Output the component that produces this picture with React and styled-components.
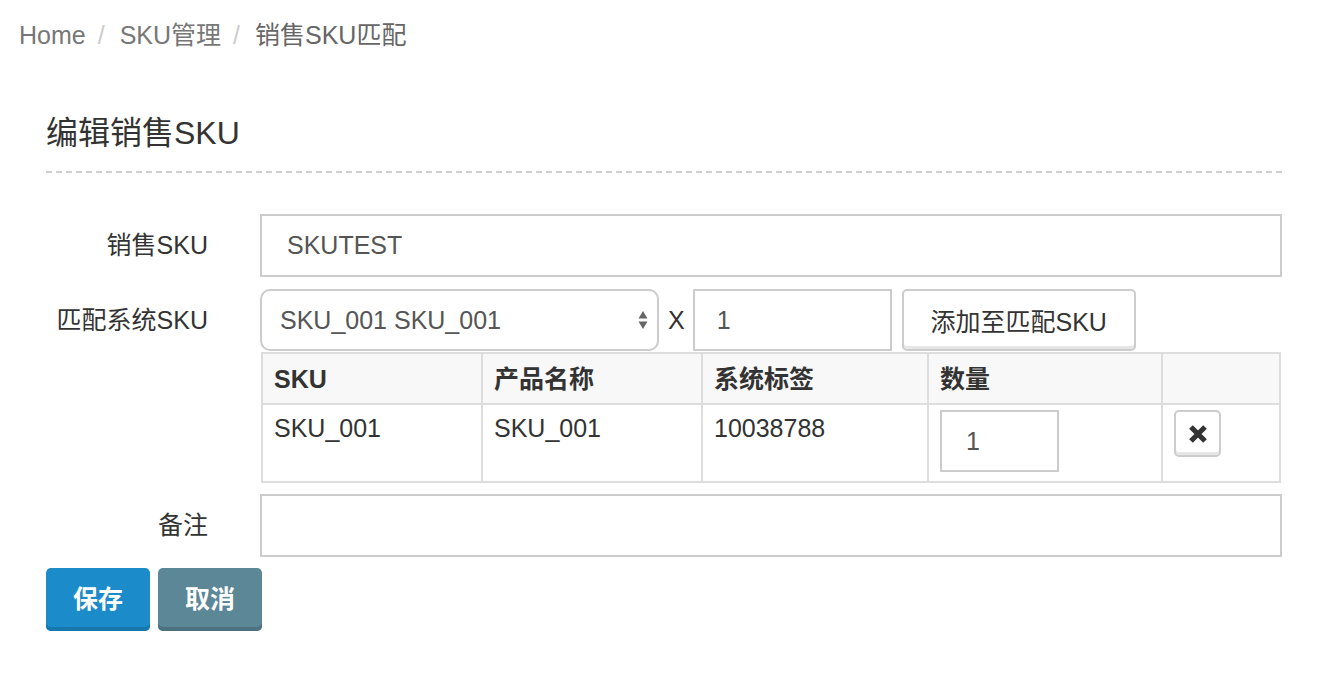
import React from 'react';
import styled, { createGlobalStyle } from 'styled-components';

const GlobalStyle = createGlobalStyle`
  * { box-sizing: border-box; }
  body {
    margin: 0;
    background: #fff;
    color: #333;
    font-family: "Liberation Sans", "Noto Sans CJK SC", sans-serif;
    font-size: 25px;
  }
`;

const Breadcrumb = styled.ol`
  list-style: none;
  margin: 0;
  padding: 17px 19px 0;
  display: flex;
  line-height: 36px;
`;

const Crumb = styled.li`
  color: ${p => (p.$active ? '#666' : '#777')};

  &:not(:first-child)::before {
    content: '/';
    color: #ccc;
    padding: 0 15px 0 12px;
  }
`;

const Page = styled.div`
  padding: 62px 48px 0 46px;
`;

const Title = styled.h3`
  margin: 0;
  font-size: 32px;
  font-weight: 400;
  line-height: 36px;
  color: #333;
  padding-bottom: 20px;
`;

const Divider = styled.div`
  height: 2px;
  background: repeating-linear-gradient(to right, #cfcfcf 0 6px, transparent 6px 10px);
`;

const Form = styled.form`
  margin-top: 41px;
  display: flex;
  flex-direction: column;
`;

const FormRow = styled.div`
  display: flex;
  align-items: flex-start;
  margin-top: ${p => p.$gap || 0}px;
`;

const Label = styled.label`
  width: 214px;
  flex-shrink: 0;
  padding-right: 52px;
  text-align: right;
  line-height: 63px;
  color: #333;
`;

const Field = styled.div`
  flex: 1;
  min-width: 0;
`;

const TextInput = styled.input`
  display: block;
  width: ${p => (p.$w ? `${p.$w}px` : '100%')};
  height: ${p => p.$h || 63}px;
  border: 2px solid #ccc;
  padding: 0 ${p => p.$pl || 25}px;
  font: inherit;
  color: #555;
  background: #fff;
  outline: none;
`;

const InlineGroup = styled.div`
  display: flex;
  align-items: center;
`;

const Select = styled.div`
  width: 399px;
  height: 62px;
  border: 2px solid #ccc;
  border-radius: 10px;
  padding: 0 9px 0 18px;
  display: flex;
  align-items: center;
  justify-content: space-between;
  color: #555;
`;

const Times = styled.span`
  margin: 0 8px 0 9px;
  color: #333;
`;

const DefaultButton = styled.button`
  height: ${p => p.$h || 62}px;
  width: ${p => p.$w}px;
  margin-left: ${p => p.$ml || 0}px;
  border: 2px solid #ccc;
  border-radius: 5px;
  background: #fff;
  box-shadow: inset 0 -3px 0 #e6e6e6;
  color: #333;
  font: inherit;
  padding: 0;
  display: flex;
  align-items: center;
  justify-content: center;
  cursor: pointer;
`;

const Table = styled.table`
  width: calc(100% - 2px);
  margin: 1px 0 0 1px;
  border-collapse: collapse;
  border: 2px solid #ddd;
  table-layout: fixed;
`;

const Th = styled.th`
  background: #f8f8f8;
  border: 2px solid #ddd;
  text-align: left;
  font-weight: 700;
  padding: 6px 11px;
  line-height: 36px;
  height: 51px;
  color: #333;
`;

const Td = styled.td`
  border: 2px solid #ddd;
  padding: 5px 11px 5px 11px;
  vertical-align: top;
  line-height: 36px;
  height: 78px;
  color: #333;
`;

const ButtonBar = styled.div`
  display: flex;
  gap: 8px;
  margin-top: 11px;
`;

const ActionButton = styled.button`
  width: 104px;
  height: 63px;
  border: none;
  border-radius: 5px;
  color: #fff;
  font: inherit;
  font-weight: 700;
  background: ${p => (p.$variant === 'primary' ? '#1b8bca' : '#5b8797')};
  box-shadow: inset 0 -4px 0 ${p => (p.$variant === 'primary' ? '#1677ad' : '#4c7180')};
  padding: 0 0 6px;
  cursor: pointer;
`;

function SortArrows() {
  return (
    <svg width="10" height="22" viewBox="0 0 10 22">
      <path d="M5 2 L9.5 9.5 L0.5 9.5 Z" fill="#666" />
      <path d="M5 20 L9.5 12.5 L0.5 12.5 Z" fill="#666" />
    </svg>
  );
}

function RemoveIcon() {
  return (
    <svg width="20" height="20" viewBox="0 0 20 20">
      <path d="M3 3 L17 17 M17 3 L3 17" stroke="#333" strokeWidth="5.2" strokeLinecap="butt" />
    </svg>
  );
}

export default function App() {
  return (
    <>
      <GlobalStyle />
      <Breadcrumb>
        <Crumb>Home</Crumb>
        <Crumb>SKU管理</Crumb>
        <Crumb $active>销售SKU匹配</Crumb>
      </Breadcrumb>
      <Page>
        <Title>编辑销售SKU</Title>
        <Divider />
        <Form onSubmit={e => e.preventDefault()}>
          <FormRow>
            <Label>销售SKU</Label>
            <Field>
              <TextInput defaultValue="SKUTEST" />
            </Field>
          </FormRow>
          <FormRow $gap={12}>
            <Label>匹配系统SKU</Label>
            <Field>
              <InlineGroup>
                <Select>
                  <span>SKU_001 SKU_001</span>
                  <SortArrows />
                </Select>
                <Times>X</Times>
                <TextInput $w={199} $h={62} $pl={22} defaultValue="1" />
                <DefaultButton type="button" $w={234} $ml={10}>添加至匹配SKU</DefaultButton>
              </InlineGroup>
              <Table>
                <colgroup>
                  <col style={{ width: 220 }} />
                  <col style={{ width: 220 }} />
                  <col style={{ width: 226 }} />
                  <col style={{ width: 234 }} />
                  <col />
                </colgroup>
                <thead>
                  <tr>
                    <Th>SKU</Th>
                    <Th>产品名称</Th>
                    <Th>系统标签</Th>
                    <Th>数量</Th>
                    <Th />
                  </tr>
                </thead>
                <tbody>
                  <tr>
                    <Td>SKU_001</Td>
                    <Td>SKU_001</Td>
                    <Td>10038788</Td>
                    <Td>
                      <TextInput $w={119} $h={62} $pl={24} defaultValue="1" />
                    </Td>
                    <Td>
                      <DefaultButton type="button" $w={47} $h={47}>
                        <RemoveIcon />
                      </DefaultButton>
                    </Td>
                  </tr>
                </tbody>
              </Table>
            </Field>
          </FormRow>
          <FormRow $gap={11}>
            <Label>备注</Label>
            <Field>
              <TextInput />
            </Field>
          </FormRow>
          <ButtonBar>
            <ActionButton type="submit" $variant="primary">保存</ActionButton>
            <ActionButton type="button">取消</ActionButton>
          </ButtonBar>
        </Form>
      </Page>
    </>
  );
}
